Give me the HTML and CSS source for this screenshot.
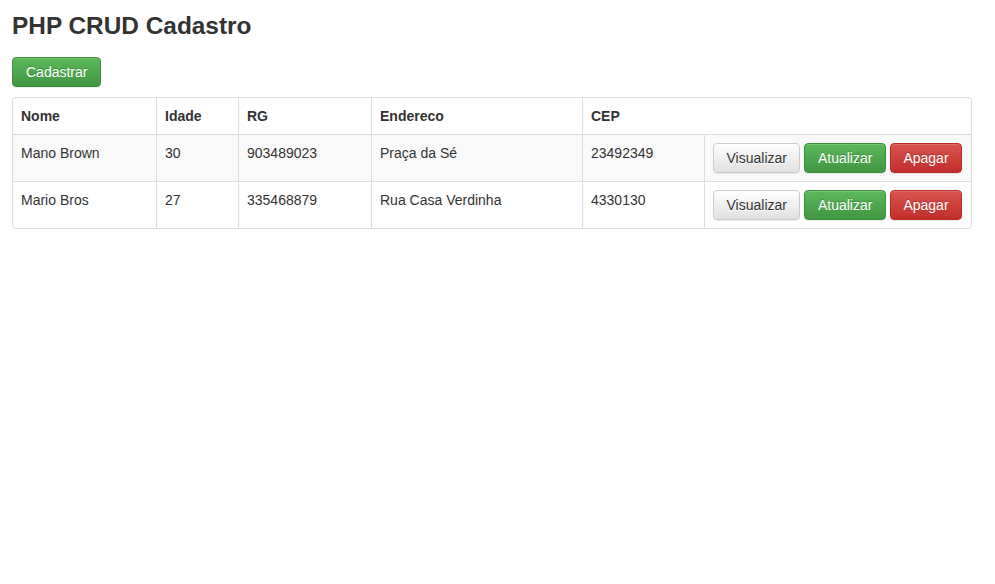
FILE: index.html
```html
<!DOCTYPE html>
<html lang="pt">
<head>
<meta charset="utf-8">
<title>PHP CRUD Cadastro</title>
<link rel="stylesheet" href="styles.css">
</head>
<body>
<div class="page">
  <h3 class="title">PHP CRUD Cadastro</h3>
  <div class="toolbar">
    <a class="btn btn-success btn-main" href="#">Cadastrar</a>
  </div>
  <div class="table-wrap">
    <table class="grid">
      <colgroup>
        <col class="c1"><col class="c2"><col class="c3"><col class="c4"><col class="c5"><col class="c6">
      </colgroup>
      <thead>
        <tr>
          <th>Nome</th>
          <th>Idade</th>
          <th>RG</th>
          <th>Endereco</th>
          <th colspan="2">CEP</th>
        </tr>
      </thead>
      <tbody>
        <tr class="odd">
          <td>Mano Brown</td>
          <td>30</td>
          <td>903489023</td>
          <td>Praça da Sé</td>
          <td>23492349</td>
          <td class="actions">
            <div class="btn-row">
              <a class="btn btn-default" href="#">Visualizar</a>
              <a class="btn btn-success" href="#">Atualizar</a>
              <a class="btn btn-danger" href="#">Apagar</a>
            </div>
          </td>
        </tr>
        <tr>
          <td>Mario Bros</td>
          <td>27</td>
          <td>335468879</td>
          <td>Rua Casa Verdinha</td>
          <td>4330130</td>
          <td class="actions">
            <div class="btn-row">
              <a class="btn btn-default" href="#">Visualizar</a>
              <a class="btn btn-success" href="#">Atualizar</a>
              <a class="btn btn-danger" href="#">Apagar</a>
            </div>
          </td>
        </tr>
      </tbody>
    </table>
  </div>
</div>
</body>
</html>
```
FILE: styles.css
```css
* { box-sizing: border-box; }
html, body { margin: 0; padding: 0; background: #fff; }
body {
  font-family: "Liberation Sans", Arial, Helvetica, sans-serif;
  font-size: 14px;
  line-height: 20px;
  color: #333;
}
.page {
  padding: 13px 12px 0 12px;
  width: 984px;
}
.title {
  margin: 0;
  font-size: 24.4px;
  line-height: 26.4px;
  font-weight: bold;
  color: #333;
}
.toolbar {
  margin-top: 18px;
  margin-bottom: 10px;
  display: flex;
}
.btn {
  display: inline-block;
  padding: 4px 12.5px;
  font-size: 14px;
  line-height: 20px;
  border: 1px solid transparent;
  border-radius: 4px;
  text-decoration: none;
  white-space: nowrap;
  text-shadow: 0 -1px 0 rgba(0,0,0,.2);
  box-shadow: inset 0 1px 0 rgba(255,255,255,.15), 0 1px 1px rgba(0,0,0,.075);
}
.btn-main {
  padding-left: 13px;
  padding-right: 13px;
}
.btn-success {
  color: #fff;
  background-image: linear-gradient(to bottom, #5cb85c 0, #419641 100%);
  border-color: #3e8f3e;
}
.btn-danger {
  color: #fff;
  background-image: linear-gradient(to bottom, #d9534f 0, #c12e2a 100%);
  border-color: #b92c28;
}
.btn-default {
  color: #333;
  text-shadow: 0 1px 0 #fff;
  background-image: linear-gradient(to bottom, #fff 0, #e0e0e0 100%);
  border-color: #ccc;
}
.table-wrap {
  width: 960px;
  border: 1px solid #ddd;
  border-radius: 4px;
  overflow: hidden;
}
.grid {
  width: 100%;
  table-layout: fixed;
  border-collapse: separate;
  border-spacing: 0;
}
.c1 { width: 143px; }
.c2 { width: 82px; }
.c3 { width: 133px; }
.c4 { width: 211px; }
.c5 { width: 122px; }
.c6 { width: 267px; }
.grid th, .grid td {
  padding: 8px;
  text-align: left;
  vertical-align: top;
  border-left: 1px solid #ddd;
  border-top: 1px solid #ddd;
}
.grid th:first-child, .grid td:first-child { border-left: 0; }
.grid thead th { border-top: 0; font-weight: bold; }
.grid tr.odd td { background: #f9f9f9; }
.btn-row {
  display: flex;
  gap: 4px;
}
```
